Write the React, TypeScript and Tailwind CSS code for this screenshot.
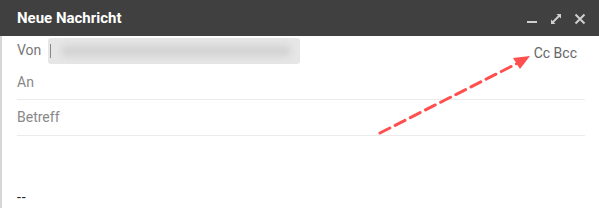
import React from "react";

function MinimizeIcon() {
  return (
    <svg width="12" height="12" viewBox="0 0 12 12" className="block">
      <rect x="1" y="8" width="10" height="2" fill="#cfcfcf" />
    </svg>
  );
}

function ExpandIcon() {
  return (
    <svg width="12" height="12" viewBox="0 0 12 12" className="block">
      <path d="M6.5 1H11v4.5L9.4 3.9 3.9 9.4 5.5 11H1V6.5l1.6 1.6 5.5-5.5z" fill="#cfcfcf" />
    </svg>
  );
}

function CloseIcon() {
  return (
    <svg width="12" height="12" viewBox="0 0 12 12" className="block">
      <path d="M1.5 1.5l9 9M10.5 1.5l-9 9" stroke="#cfcfcf" strokeWidth="2" />
    </svg>
  );
}

export default function App() {
  return (
    <div
      className="relative h-[208px] w-[599px] overflow-hidden bg-white"
      style={{ fontFamily: "Roboto, 'Liberation Sans', sans-serif" }}
    >
      <div className="flex h-[36px] items-center justify-between bg-[#404040] pl-[17px] pr-[13px]">
        <span className="text-[15px] font-bold text-white">Neue Nachricht</span>
        <div className="flex items-center gap-[12px] pt-[2px]">
          <MinimizeIcon />
          <ExpandIcon />
          <CloseIcon />
        </div>
      </div>

      <div className="flex h-[calc(100%-36px)] border-l-2 border-[#d6d6d6]">
        <div className="flex flex-1 flex-col pl-[15px] pr-[14px]">
          <div className="flex h-[28px] items-end justify-between">
            <div className="flex items-center gap-[7px]">
              <span className="text-[14px] leading-[20px] text-[#777]">Von</span>
              <div className="relative mt-[2px] flex h-[26px] w-[252px] items-center rounded-[3px] bg-[#e6e6e6] pl-[2px]">
                <div className="h-[14px] w-px bg-[#888]" />
                <div className="ml-[10px] h-[12px] w-[230px] rounded-full bg-[#d4d4d4] blur-[3px]" />
              </div>
            </div>
            <span className="mb-[1px] pr-[8px] text-[14px] leading-[20px] text-[#666]">Cc Bcc</span>
          </div>
          <div className="flex h-[36px] items-center border-b border-[#ebebeb] pt-[2px]">
            <span className="text-[14px] text-[#888]">An</span>
          </div>
          <div className="flex h-[36px] items-center border-b border-[#ebebeb]">
            <span className="text-[14px] text-[#888]">Betreff</span>
          </div>
          <div className="pt-[51px] text-[14px] leading-[20px] tracking-[1px] text-[#222]">--</div>
        </div>
      </div>

      <svg className="pointer-events-none absolute left-0 top-0" width="599" height="208">
        <line
          x1="380"
          y1="133"
          x2="518"
          y2="63"
          stroke="#ff4f4f"
          strokeWidth="3"
          strokeDasharray="11 6"
          strokeLinecap="round"
        />
        <polygon points="530,56 513,58 520,69" fill="#ff4f4f" />
      </svg>
    </div>
  );
}
